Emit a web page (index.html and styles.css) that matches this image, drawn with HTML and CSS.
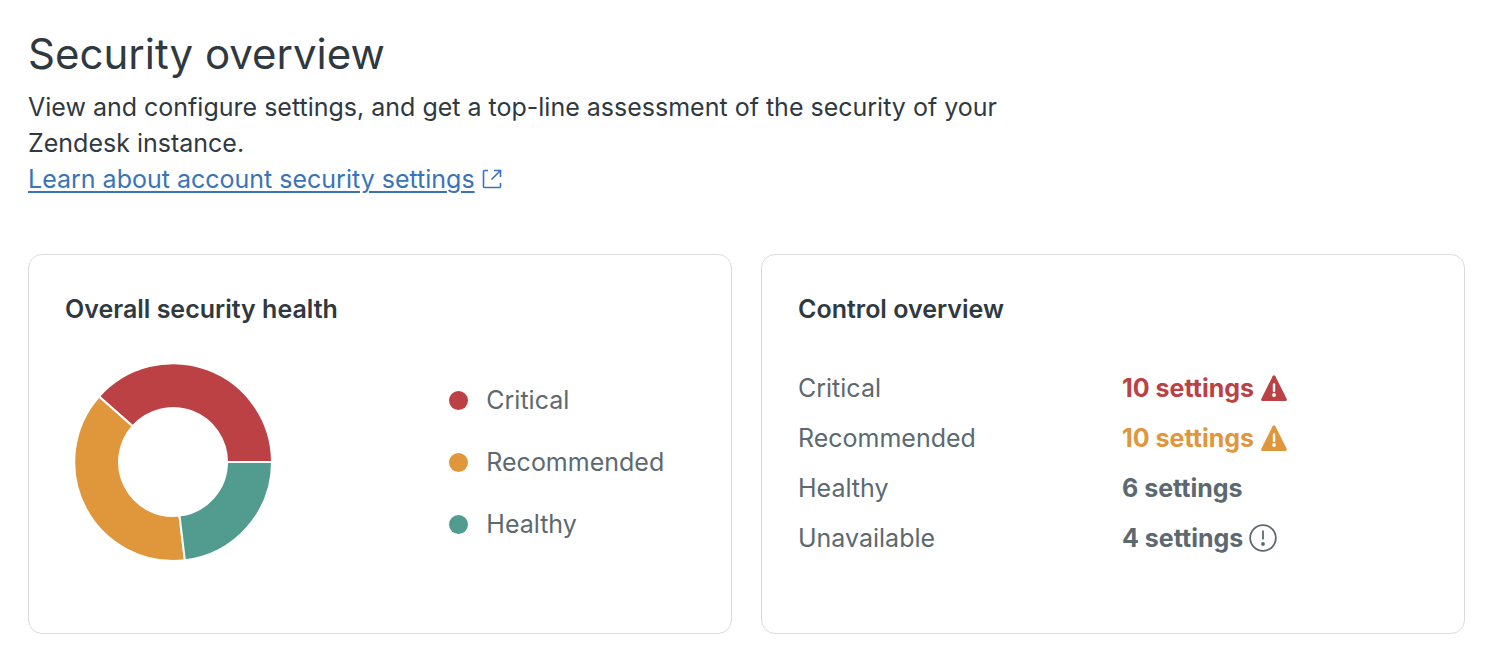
FILE: index.html
```html
<!DOCTYPE html>
<html lang="en">
<head>
    <meta charset="utf-8">
    <meta name="viewport" content="width=device-width, initial-scale=1">
    <title>Security overview</title>
    <link rel="stylesheet" href="styles.css">
</head>
<body>
    <header class="page-header">
        <h1>Security overview</h1>
        <p>View and configure settings, and get a top-line assessment of the security of your Zendesk instance.</p>
        <a href="#" class="learn-link"><span>Learn about account security settings</span><svg class="external-icon" viewBox="0 0 20 20" aria-hidden="true">
            <path d="M6 1.500H2.500Q1.500 1.500 1.500 2.500V17.500Q1.500 18.500 2.500 18.500H17.500Q18.500 18.500 18.500 17.500V14M9.500 10.500L18 2M12 1.500H18.500V8"/>
        </svg></a>
    </header>

    <main class="cards">
        <section class="card">
            <h2>Overall security health</h2>
            <div class="health">
                <!-- 10 critical, 10 recommended, 6 healthy -->
                <svg class="donut" viewBox="-108 -108 216 216" role="img" aria-label="Overall security health">
                    <path class="critical" d="M-74 -65.500A99 99 0 0 1 99 0H54A54 54 0 0 0 -40.400 -35.800Z"/>
                    <path class="recommended" d="M11.900 98.300A99 99 0 0 1 -74 -65.500L-40.400 -35.800A54 54 0 0 0 6.500 53.600Z"/>
                    <path class="healthy" d="M99 0A99 99 0 0 1 11.900 98.300L6.500 53.600A54 54 0 0 0 54 0Z"/>
                </svg>
                <ul class="legend">
                    <li><span class="dot critical"></span>Critical</li>
                    <li><span class="dot recommended"></span>Recommended</li>
                    <li><span class="dot healthy"></span>Healthy</li>
                </ul>
            </div>
        </section>

        <section class="card">
            <h2>Control overview</h2>
            <table class="controls">
                <tr>
                    <th scope="row">Critical</th>
                    <td class="critical">
                        <div class="count">10 settings
                            <svg class="icon" viewBox="0 0 28 28" aria-hidden="true">
                                <path class="fill" d="M12.600 2.300Q14 .3 15.400 2.300L26.600 24.700Q27.400 27 25.400 27H2.600Q.6 27 1.400 24.700Z"/>
                                <path class="mark" d="M14 10.500V17"/>
                                <circle class="mark-dot" cx="14" cy="21" r="1.900"/>
                            </svg>
                        </div>
                    </td>
                </tr>
                <tr>
                    <th scope="row">Recommended</th>
                    <td class="recommended">
                        <div class="count">10 settings
                            <svg class="icon" viewBox="0 0 28 28" aria-hidden="true">
                                <path class="fill" d="M12.600 2.300Q14 .3 15.400 2.300L26.600 24.700Q27.400 27 25.400 27H2.600Q.6 27 1.400 24.700Z"/>
                                <path class="mark" d="M14 10.500V17"/>
                                <circle class="mark-dot" cx="14" cy="21" r="1.900"/>
                            </svg>
                        </div>
                    </td>
                </tr>
                <tr>
                    <th scope="row">Healthy</th>
                    <td><div class="count">6 settings</div></td>
                </tr>
                <tr>
                    <th scope="row">Unavailable</th>
                    <td>
                        <div class="count">4 settings
                            <svg class="icon" viewBox="0 0 28 28" aria-hidden="true">
                                <circle class="ring" cx="14" cy="14" r="12.800"/>
                                <path class="ring" d="M14 6.500V15.500"/>
                                <circle class="fill" cx="14" cy="20" r="1.900"/>
                            </svg>
                        </div>
                    </td>
                </tr>
            </table>
        </section>
    </main>
</body>
</html>
```

FILE: styles.css
```css
body {
    font-family: Inter, "Liberation Sans", sans-serif;
    font-size: 25px;
    line-height: 36px;
    margin: 0;
    padding: 28px 25px 28px 28px;
    background: #fff;
    color: #2f3941;
}

h1 {
    font-size: 42px;
    font-weight: 400;
    line-height: 52px;
    margin: 0 0 9px;
}

h2 {
    font-size: 25px;
    font-weight: 600;
    line-height: 36px;
    margin: 0;
}

.page-header p {
    max-width: 980px;
    margin: 0;
}

.learn-link {
    display: inline-flex;
    align-items: center;
    gap: 7px;
    color: #3974b9;
    text-decoration: none;
}

.learn-link span {
    text-decoration: underline;
    text-decoration-thickness: 2px;
    text-underline-offset: 3px;
}

.external-icon {
    width: 20px;
    height: 20px;
    fill: none;
    stroke: currentColor;
    stroke-width: 1.6;
}

.cards {
    display: grid;
    grid-template-columns: 1fr 1fr;
    gap: 29px;
    margin-top: 57px;
}

.card {
    border: 1px solid #d8dcde;
    border-radius: 14px;
    padding: 36px 36px 63px;
    color: #5c6970;
}

.card h2 {
    color: #2f3941;
}

.critical {
    color: #bb4144;
}

.recommended {
    color: #e0963b;
}

.healthy {
    color: #529c8f;
}

.health {
    display: grid;
    grid-template-columns: 61% 1fr;
    align-items: center;
    margin-top: 27px;
}

.donut {
    display: block;
    width: 216px;
    height: 216px;
    stroke: #fff;
    stroke-width: 2;
}

.donut path {
    fill: currentColor;
}

.legend {
    display: grid;
    gap: 26px;
    list-style: none;
    margin: 0;
    padding: 0;
}

.legend li {
    display: flex;
    align-items: center;
    gap: 18px;
}

.dot {
    width: 19px;
    height: 19px;
    border-radius: 50%;
    background: currentColor;
}

.controls {
    width: 100%;
    margin-top: 36px;
    border-collapse: collapse;
}

.controls th,
.controls td {
    height: 50px;
    padding: 0;
    text-align: left;
}

.controls th {
    width: 324px;
    font-weight: 400;
}

.controls td {
    font-weight: 700;
}

.count {
    display: flex;
    align-items: center;
    gap: 6px;
}

.icon {
    width: 28px;
    height: 28px;
}

.fill {
    fill: currentColor;
}

.ring {
    fill: none;
    stroke: currentColor;
    stroke-width: 1.8;
}

.mark {
    stroke: #fff;
    stroke-width: 2.4;
    stroke-linecap: round;
}

.mark-dot {
    fill: #fff;
}
```
